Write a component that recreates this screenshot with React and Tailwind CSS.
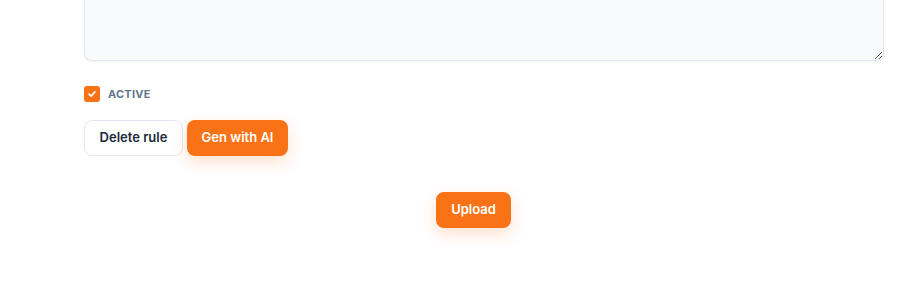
export default function App() {
  return (
    <div className="w-[922px] h-[282px] overflow-hidden bg-white" style={{ fontFamily: "Inter, 'Noto Sans', sans-serif" }}>
      <div className="pl-[84px] pr-[38px]">
        <textarea
          className="block w-full h-[101px] -mt-[40px] rounded-lg border border-[#e2e8f0] bg-[#f8fafc] shadow-[0_1px_2px_rgba(15,23,42,0.06)] outline-none"
          defaultValue=""
        />
        <label className="mt-[25px] flex items-center gap-2 h-[16px]">
          <span className="w-4 h-4 rounded-[3px] bg-[#f97316] flex items-center justify-center">
            <svg width="10" height="10" viewBox="0 0 12 12" fill="none">
              <path d="M2.5 6.2 L5 8.5 L9.5 3.5" stroke="white" strokeWidth="2" strokeLinecap="round" strokeLinejoin="round" />
            </svg>
          </span>
          <span className="text-[11px] font-bold tracking-[0.02em] text-[#64748b] leading-none">ACTIVE</span>
        </label>
        <div className="mt-[18px] flex gap-1">
          <button className="w-[99px] h-[36px] rounded-lg border border-[#e2e8f0] bg-white text-[13px] font-semibold text-[#1e293b]">
            Delete rule
          </button>
          <button className="w-[101px] h-[36px] rounded-lg bg-[#f97316] text-[13px] font-semibold text-white shadow-[0_6px_16px_rgba(249,115,22,0.22)]">
            Gen with AI
          </button>
        </div>
      </div>
      <div className="mt-[36px] pl-[436px]">
        <button className="w-[75px] h-[36px] rounded-lg bg-[#f97316] text-[13px] font-semibold text-white shadow-[0_6px_16px_rgba(249,115,22,0.22)]">
          Upload
        </button>
      </div>
    </div>
  );
}
